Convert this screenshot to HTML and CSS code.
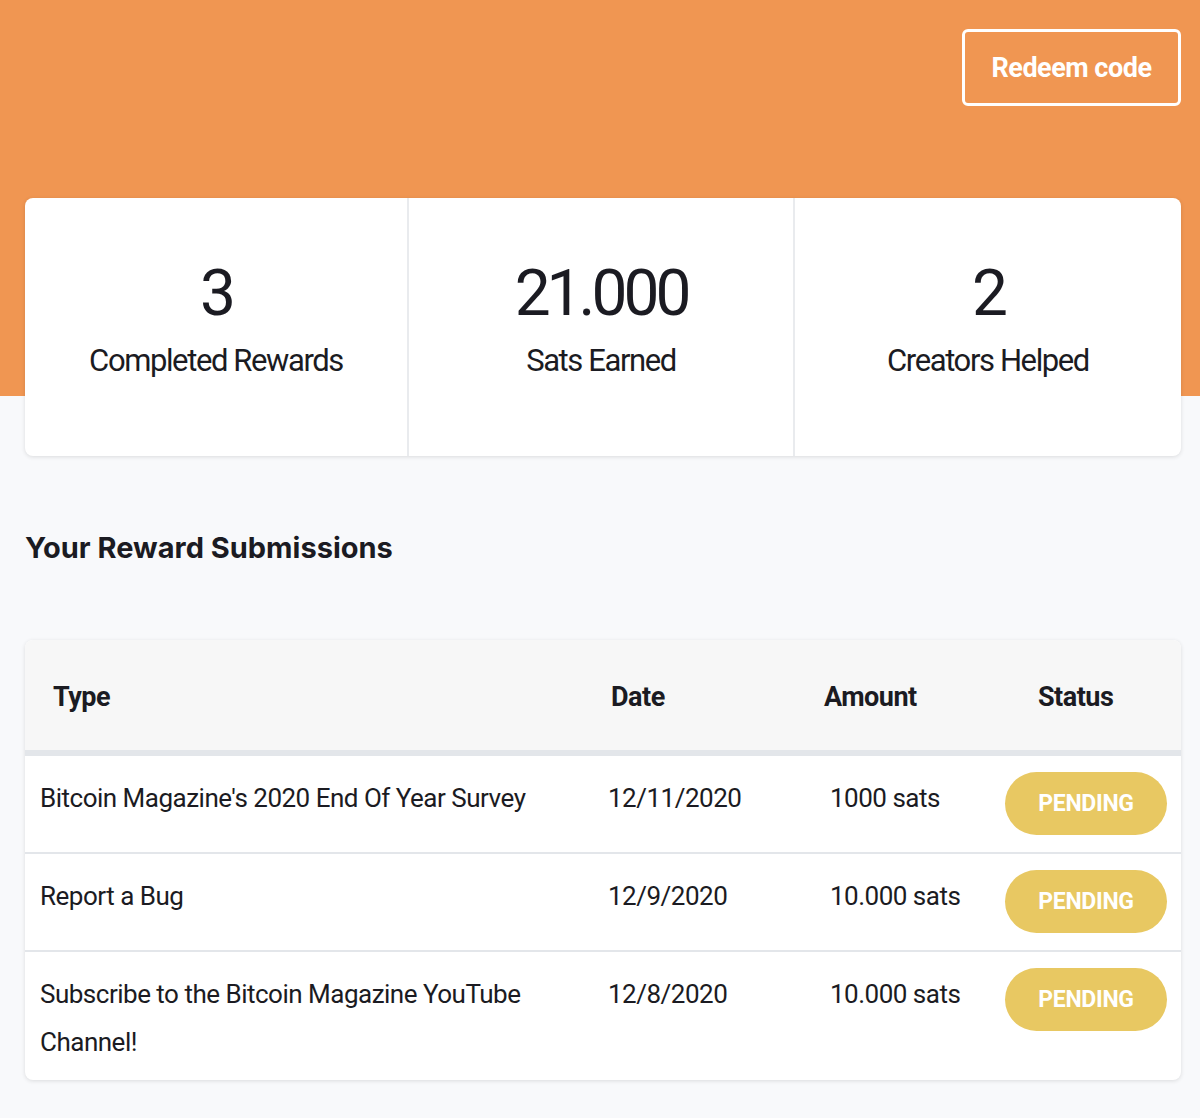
FILE: index.html
```html
<!DOCTYPE html>
<html lang="en">
<head>
    <meta charset="UTF-8">
    <meta name="viewport" content="width=device-width, initial-scale=1.0">
    <title>Rewards</title>
    <link rel="stylesheet" href="styles.css">
</head>
<body>

    <!-- Orange banner with the redeem button -->
    <header class="banner">
        <a class="redeem-btn" href="#redeem">Redeem code</a>
    </header>

    <main class="content">

        <!-- Stats card -->
        <section class="stats">
            <div class="stat">
                <div class="stat-number">3</div>
                <div class="stat-label">Completed Rewards</div>
            </div>
            <div class="stat">
                <div class="stat-number">21.000</div>
                <div class="stat-label">Sats Earned</div>
            </div>
            <div class="stat">
                <div class="stat-number">2</div>
                <div class="stat-label">Creators Helped</div>
            </div>
        </section>

        <h2 class="section-title">Your Reward Submissions</h2>

        <!-- Submissions table -->
        <section class="submissions">
            <div class="row head">
                <div class="cell type">Type</div>
                <div class="cell date">Date</div>
                <div class="cell amount">Amount</div>
                <div class="cell status">Status</div>
            </div>
            <div class="row">
                <div class="cell type">Bitcoin Magazine's 2020 End Of Year Survey</div>
                <div class="cell date">12/11/2020</div>
                <div class="cell amount">1000 sats</div>
                <div class="cell status"><span class="pill">PENDING</span></div>
            </div>
            <div class="row">
                <div class="cell type">Report a Bug</div>
                <div class="cell date">12/9/2020</div>
                <div class="cell amount">10.000 sats</div>
                <div class="cell status"><span class="pill">PENDING</span></div>
            </div>
            <div class="row">
                <div class="cell type">Subscribe to the Bitcoin Magazine YouTube Channel!</div>
                <div class="cell date">12/8/2020</div>
                <div class="cell amount">10.000 sats</div>
                <div class="cell status"><span class="pill">PENDING</span></div>
            </div>
        </section>

    </main>

</body>
</html>
```

FILE: styles.css
```css
/* General page */
html, body {
    margin: 0;
    padding: 0;
}

body {
    font-family: Roboto, "Noto Sans", sans-serif;
    background-color: #f8f9fb;
    color: #1b1b22;
}

/* Orange banner */
.banner {
    background-color: #f09652;
    height: 396px;
    display: flex;
    justify-content: flex-end;
    align-items: flex-start;
    padding: 29px 19px 0 0;
    box-sizing: border-box;
}

/* Outlined redeem button */
.redeem-btn {
    display: flex;
    align-items: center;
    justify-content: center;
    width: 219px;
    height: 77px;
    box-sizing: border-box;
    border: 3px solid white;
    border-radius: 6px;
    color: white;
    text-decoration: none;
    font-size: 27px;
    font-weight: 700;
    letter-spacing: -0.5px;
}

/* Content sits over the banner */
.content {
    margin: -198px 19px 0 25px;
    padding-bottom: 36px;
}

/* Stats card */
.stats {
    display: grid;
    grid-template-columns: 382px 386px 1fr;
    height: 258px;
    background-color: white;
    border-radius: 8px;
    box-shadow: 0 1px 4px rgba(0, 0, 0, 0.12);
}

.stat {
    display: flex;
    flex-direction: column;
    align-items: center;
    padding-top: 56px;
    border-left: 2px solid #e9ebee;
}

.stat:first-child {
    border-left: none;
}

.stat-number {
    font-size: 64px;
    line-height: 80px;
    font-weight: 400;
    letter-spacing: -4px;
}

.stat-label {
    font-size: 31px;
    line-height: 54px;
    letter-spacing: -1.4px;
}

/* Section heading */
.section-title {
    margin: 72px 0 72px 0;
    font-family: Inter, Lato, sans-serif;
    font-size: 29px;
    line-height: 40px;
    font-weight: 700;
    letter-spacing: 0;
}

/* Submissions table */
.submissions {
    background-color: white;
    border-radius: 8px;
    box-shadow: 0 1px 4px rgba(0, 0, 0, 0.12);
    overflow: hidden;
}

.row {
    display: grid;
    grid-template-columns: 570px 210px 190px 1fr;
    min-height: 96px;
    border-top: 2px solid #e3e6ea;
    font-size: 26px;
    line-height: 48px;
    letter-spacing: -0.5px;
}

.cell {
    padding: 18px 0 14px 15px;
}

.cell.date {
    padding-left: 13px;
}

.cell.amount {
    padding-left: 25px;
}

.cell.status {
    padding: 16px 0 0 10px;
}

/* Header row */
.row.head {
    background-color: #f7f7f7;
    border-top: none;
    border-bottom: 4px solid #e3e6ea;
    height: 110px;
    align-items: center;
    font-size: 27px;
    font-weight: 700;
}

.head .cell {
    padding: 4px 0 0 0;
}

.head .cell.type {
    padding-left: 28px;
}

.head .cell.date {
    padding-left: 16px;
}

.head .cell.amount {
    padding-left: 19px;
}

.head .cell.status {
    padding-left: 43px;
}

/* Status pill */
.pill {
    display: inline-flex;
    align-items: center;
    justify-content: center;
    width: 162px;
    height: 63px;
    border-radius: 32px;
    background-color: #e8c862;
    color: white;
    font-size: 23px;
    font-weight: 700;
    letter-spacing: -0.3px;
}
```
